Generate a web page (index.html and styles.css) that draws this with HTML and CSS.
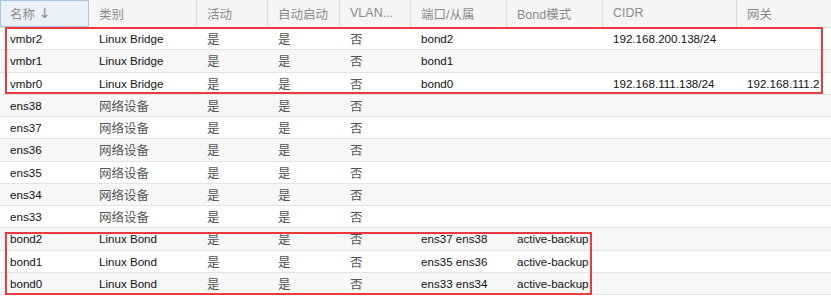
FILE: index.html
```html
<!DOCTYPE html>
<html>
<head>
<meta charset="utf-8">
<link rel="stylesheet" href="styles.css">
</head>
<body>
<div class="grid">
  <div class="row head">
    <div class="hc sel">名称 <span class="arrow">↓</span></div>
    <div class="hc">类别</div>
    <div class="hc">活动</div>
    <div class="hc">自动启动</div>
    <div class="hc">VLAN...</div>
    <div class="hc">端口/从属</div>
    <div class="hc">Bond模式</div>
    <div class="hc">CIDR</div>
    <div class="hc">网关</div>
  </div>
  <div class="row"><div>vmbr2</div><div>Linux Bridge</div><div class="cj">是</div><div class="cj">是</div><div class="cj">否</div><div>bond2</div><div></div><div>192.168.200.138/24</div><div></div></div>
  <div class="row alt"><div>vmbr1</div><div>Linux Bridge</div><div class="cj">是</div><div class="cj">是</div><div class="cj">否</div><div>bond1</div><div></div><div></div><div></div></div>
  <div class="row"><div>vmbr0</div><div>Linux Bridge</div><div class="cj">是</div><div class="cj">是</div><div class="cj">否</div><div>bond0</div><div></div><div>192.168.111.138/24</div><div>192.168.111.2</div></div>
  <div class="row alt"><div>ens38</div><div class="cj">网络设备</div><div class="cj">是</div><div class="cj">是</div><div class="cj">否</div><div></div><div></div><div></div><div></div></div>
  <div class="row"><div>ens37</div><div class="cj">网络设备</div><div class="cj">是</div><div class="cj">是</div><div class="cj">否</div><div></div><div></div><div></div><div></div></div>
  <div class="row alt"><div>ens36</div><div class="cj">网络设备</div><div class="cj">是</div><div class="cj">是</div><div class="cj">否</div><div></div><div></div><div></div><div></div></div>
  <div class="row"><div>ens35</div><div class="cj">网络设备</div><div class="cj">是</div><div class="cj">是</div><div class="cj">否</div><div></div><div></div><div></div><div></div></div>
  <div class="row alt"><div>ens34</div><div class="cj">网络设备</div><div class="cj">是</div><div class="cj">是</div><div class="cj">否</div><div></div><div></div><div></div><div></div></div>
  <div class="row"><div>ens33</div><div class="cj">网络设备</div><div class="cj">是</div><div class="cj">是</div><div class="cj">否</div><div></div><div></div><div></div><div></div></div>
  <div class="row alt"><div>bond2</div><div>Linux Bond</div><div class="cj">是</div><div class="cj">是</div><div class="cj">否</div><div>ens37 ens38</div><div>active-backup</div><div></div><div></div></div>
  <div class="row"><div>bond1</div><div>Linux Bond</div><div class="cj">是</div><div class="cj">是</div><div class="cj">否</div><div>ens35 ens36</div><div>active-backup</div><div></div><div></div></div>
  <div class="row alt"><div>bond0</div><div>Linux Bond</div><div class="cj">是</div><div class="cj">是</div><div class="cj">否</div><div>ens33 ens34</div><div>active-backup</div><div></div><div></div></div>
  <div class="mark mark1"></div>
  <div class="mark mark2"></div>
</div>
</body>
</html>
```
FILE: styles.css
```css
html, body {
  margin: 0;
  padding: 0;
  background: #fff;
  overflow: hidden;
}
body {
  width: 831px;
  height: 297px;
  font-family: "Liberation Sans", "Noto Sans CJK SC", sans-serif;
  font-size: 11.6px;
  color: #111;
}
.grid {
  position: relative;
  width: 831px;
  overflow: hidden;
}
.row {
  display: grid;
  grid-template-columns: 89px 108px 71px 72px 71px 96px 96px 134px 94px;
  height: 22.25px;
  box-sizing: border-box;
  border-bottom: 1px solid #e3e3e3;
  background: #fff;
  align-items: center;
}
.row.alt {
  background: #f7f7f7;
}
.row > div {
  padding-left: 10px;
  white-space: nowrap;
  overflow: hidden;
}
.row .cj {
  color: #555;
  font-size: 12.5px;
}
.row.head {
  height: 28px;
  background: #f5f5f5;
  border-bottom: 1px solid #e0e0e0;
  align-items: stretch;
}
.row.head .hc {
  display: flex;
  align-items: center;
  padding-left: 10px;
  padding-bottom: 1px;
  border-right: 1px solid #dcdcdc;
  color: #8a8a8a;
  font-size: 12.5px;
  box-sizing: border-box;
}
.row.head .hc:last-child {
  border-right: none;
}
.row.head .hc.sel {
  background: #eaf1f9;
  border: 1px solid #a7c6e6;
  padding-left: 9px;
}
.arrow {
  margin-left: 4px;
  font-family: "DejaVu Sans", sans-serif;
  font-size: 14px;
  color: #8a8a8a;
}
.mark {
  position: absolute;
  border: 2px solid #ec3b3f;
  box-sizing: border-box;
}
.mark1 {
  left: 5px;
  top: 27px;
  width: 818px;
  height: 67px;
}
.mark2 {
  left: 5px;
  top: 232px;
  width: 587px;
  height: 63px;
}
```
